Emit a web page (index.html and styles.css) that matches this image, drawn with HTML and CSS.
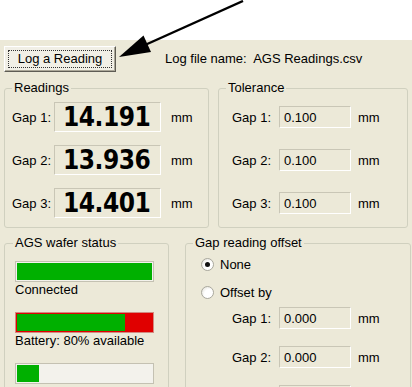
FILE: index.html
```html
<!DOCTYPE html>
<html>
<head>
<meta charset="utf-8">
<link rel="stylesheet" href="styles.css">
</head>
<body>
<div class="top"></div>
<div class="window">
  <div class="toolbar">
    <button class="btn"><span class="focus">Log a Reading</span></button>
    <span class="logfile">Log file name:&nbsp; AGS Readings.csv</span>
  </div>
  <div class="row row-top">
    <fieldset class="group readings">
      <legend>Readings</legend>
      <div class="content">
        <div class="line"><span class="lbl">Gap 1:</span><span class="bigbox">14.191</span><span class="unit">mm</span></div>
        <div class="line"><span class="lbl">Gap 2:</span><span class="bigbox">13.936</span><span class="unit">mm</span></div>
        <div class="line"><span class="lbl">Gap 3:</span><span class="bigbox">14.401</span><span class="unit">mm</span></div>
      </div>
    </fieldset>
    <fieldset class="group tolerance">
      <legend>Tolerance</legend>
      <div class="content">
        <div class="line"><span class="lbl">Gap 1:</span><span class="box">0.100</span><span class="unit">mm</span></div>
        <div class="line"><span class="lbl">Gap 2:</span><span class="box">0.100</span><span class="unit">mm</span></div>
        <div class="line"><span class="lbl">Gap 3:</span><span class="box">0.100</span><span class="unit">mm</span></div>
      </div>
    </fieldset>
  </div>
  <div class="row row-bottom">
    <fieldset class="group status">
      <legend>AGS wafer status</legend>
      <div class="content">
        <div class="bar"><div class="fill" style="width:100%"></div></div>
        <div class="caption">Connected</div>
        <div class="bar bar-red"><div class="fill" style="width:80%"></div></div>
        <div class="caption">Battery: 80% available</div>
        <div class="bar"><div class="fill" style="width:16%"></div></div>
      </div>
    </fieldset>
    <fieldset class="group offset">
      <legend>Gap reading offset</legend>
      <div class="content">
        <div class="opt"><span class="radio checked"><span class="dot"></span></span><span>None</span></div>
        <div class="opt opt2"><span class="radio"></span><span>Offset by</span></div>
        <div class="oline"><span class="lbl">Gap 1:</span><span class="box">0.000</span><span class="unit">mm</span></div>
        <div class="oline"><span class="lbl">Gap 2:</span><span class="box">0.000</span><span class="unit">mm</span></div>
        <div class="oline"><span class="lbl">Gap 3:</span><span class="box">0.000</span><span class="unit">mm</span></div>
      </div>
    </fieldset>
  </div>
</div>
<svg class="arrow" width="412" height="70" viewBox="0 0 412 70">
  <line x1="243" y1="1" x2="145" y2="45" stroke="#000" stroke-width="2.4"/>
  <polygon points="119,57 143.5,35.5 151,52" fill="#000"/>
</svg>
</body>
</html>
```
FILE: styles.css
```css
html, body {
  margin: 0;
  padding: 0;
  background: #fff;
}
body {
  width: 412px;
  height: 387px;
  overflow: hidden;
  position: relative;
  font-family: "Liberation Sans", Arial, sans-serif;
  font-size: 13px;
  color: #000;
}
.top {
  height: 40px;
}
.window {
  background: #ECE9D8;
  height: 347px;
  box-sizing: border-box;
  padding: 6px 0 0 4px;
  overflow: hidden;
}
.toolbar {
  display: flex;
  align-items: center;
  height: 26px;
}
.btn {
  width: 112px;
  height: 26px;
  box-sizing: border-box;
  margin: 0;
  padding: 3px;
  font: inherit;
  color: #000;
  background: #F1EFE6;
  border: 1px solid;
  border-color: #fff #5E5C54 #5E5C54 #fff;
  box-shadow: inset -1px -1px 0 #ACA899;
  display: flex;
}
.focus {
  flex: 1;
  border: 1px dotted #333;
  display: flex;
  align-items: center;
  justify-content: center;
  line-height: 16px;
}
.logfile {
  margin-left: 49px;
  line-height: 16px;
}
.row {
  display: flex;
}
.row-top {
  margin-top: 9px;
}
.row-bottom {
  margin-top: 8px;
}
.group {
  margin: 0;
  padding: 0;
  min-width: 0;
  box-sizing: border-box;
  border: 1px solid #D0D0BF;
  border-radius: 3px;
}
.group legend {
  margin-left: 7px;
  padding: 0 2px;
  line-height: 14px;
  font-size: 13px;
}
.readings {
  width: 205px;
  height: 147px;
}
.readings .content {
  padding: 7px 0 0 7px;
  display: flex;
  flex-direction: column;
  gap: 13px;
}
.tolerance {
  width: 190px;
  height: 147px;
  margin-left: 9px;
}
.tolerance .group legend,
.tolerance legend {
  margin-left: 7px;
}
.tolerance .content {
  padding: 7px 0 0 13px;
  display: flex;
  flex-direction: column;
  gap: 13px;
}
.line {
  display: flex;
  align-items: center;
  height: 30px;
}
.readings .lbl {
  width: 42px;
}
.tolerance .lbl {
  width: 47px;
}
.bigbox {
  width: 107px;
  height: 30px;
  box-sizing: border-box;
  border: 1px solid;
  border-color: #C9C6B6 #fff #fff #C9C6B6;
  padding-left: 8px;
  display: flex;
  align-items: center;
  font-family: "DejaVu Sans", sans-serif;
  font-stretch: condensed;
  font-weight: bold;
  font-size: 26px;
  letter-spacing: -0.5px;
}
.box {
  width: 72px;
  height: 22px;
  box-sizing: border-box;
  border: 1px solid;
  border-color: #C9C6B6 #fff #fff #C9C6B6;
  padding-left: 4px;
  display: flex;
  align-items: center;
}
.readings .unit {
  margin-left: 10px;
}
.tolerance .unit {
  margin-left: 7px;
}
.status {
  width: 165px;
  height: 170px;
}
.status legend {
  margin-left: 8px;
}
.status .content {
  padding: 11px 0 0 10px;
}
.bar {
  width: 139px;
  height: 21px;
  box-sizing: border-box;
  border: 1px solid #C4C1B2;
  padding: 1px;
  background: #F3F2EC;
}
.bar-red {
  background: #E00000;
  border-color: #D28A80;
}
.fill {
  height: 100%;
  background: #00B000;
}
.caption {
  line-height: 14px;
  margin: 1px 0 15px;
}
.offset {
  width: 226px;
  height: 170px;
  margin-left: 16px;
}
.offset .content {
  padding: 6px 0 0 15px;
}
.opt {
  display: flex;
  align-items: center;
  height: 16px;
  gap: 6px;
}
.opt2 {
  margin-top: 12px;
}
.radio {
  width: 13px;
  height: 13px;
  box-sizing: border-box;
  border-radius: 50%;
  border: 1px solid #A9A89E;
  background: radial-gradient(circle at 65% 65%, #fff 45%, #DCDAD0 100%);
  display: flex;
  align-items: center;
  justify-content: center;
}
.dot {
  width: 5px;
  height: 5px;
  border-radius: 50%;
  background: #111;
}
.oline {
  display: flex;
  align-items: center;
  height: 22px;
  margin-top: 17px;
  padding-left: 31px;
}
.opt2 + .oline {
  margin-top: 7px;
}
.offset .lbl {
  width: 47px;
}
.offset .unit {
  margin-left: 7px;
}
.arrow {
  position: absolute;
  left: 0;
  top: 0;
  pointer-events: none;
}
```
